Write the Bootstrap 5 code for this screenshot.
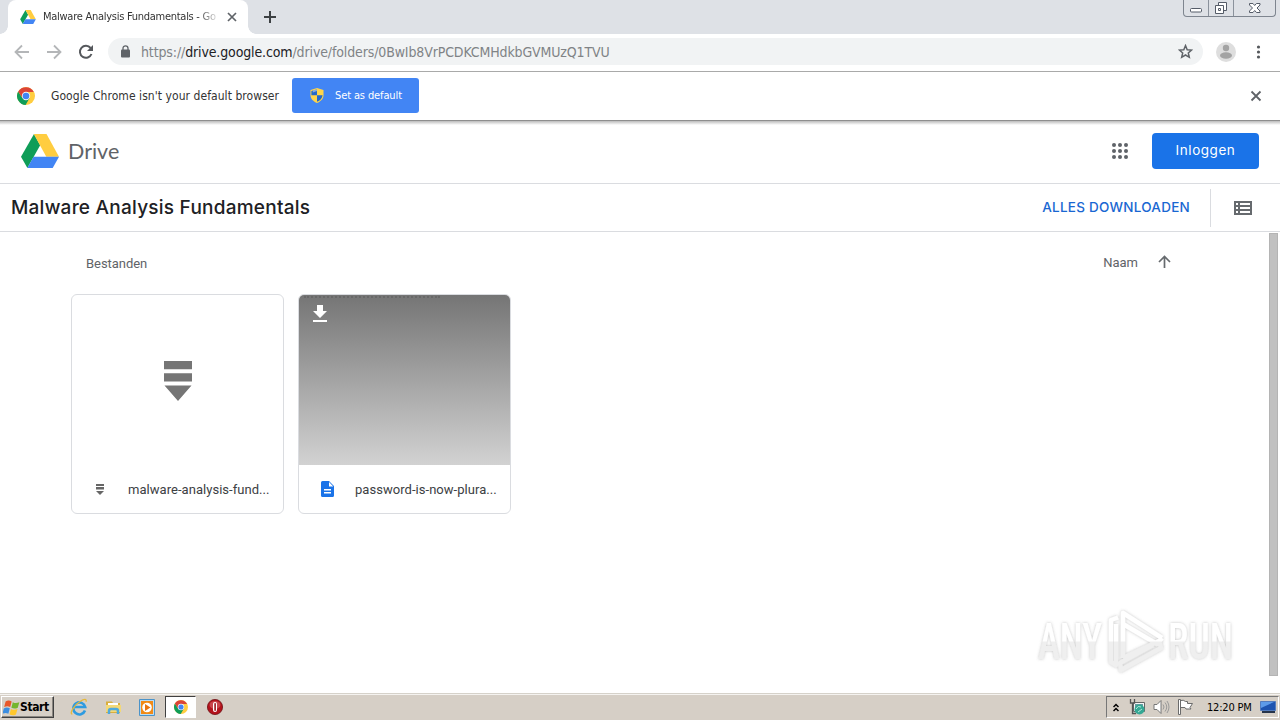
<!DOCTYPE html>
<html lang="nl">
<head>
    <meta charset="UTF-8">
    <meta name="viewport" content="width=device-width, initial-scale=1.0">
    <title>Malware Analysis Fundamentals - Google Drive</title>
    <link href="https://cdn.jsdelivr.net/npm/bootstrap@5.3.3/dist/css/bootstrap.min.css" rel="stylesheet">
    <style>
        body {
            width: 1280px;
            height: 720px;
            overflow: hidden;
            background: #fff;
            color: #333;
            font-family: "DejaVu Sans Condensed", "DejaVu Sans", sans-serif;
            font-stretch: condensed;
            line-height: 1;
        }
        svg { display: block; flex: none; }
        span { white-space: nowrap; }

        /* Chrome window */
        .tab-strip { height: 34px; background: #dee1e6; padding-left: 8px; }
        .browser-tab {
            width: 240px;
            height: 34px;
            padding: 0 11px 0 12px;
            background: #fff;
            border-radius: 8px 8px 0 0;
            font-size: 11px;
            position: relative;
        }
        .browser-tab::before, .browser-tab::after {
            content: "";
            position: absolute;
            bottom: 0;
            width: 8px;
            height: 8px;
        }
        .browser-tab::before { left: -8px; background: radial-gradient(circle at 0 0, #dee1e6 7.5px, #fff 8px); }
        .browser-tab::after { right: -8px; background: radial-gradient(circle at 100% 0, #dee1e6 7.5px, #fff 8px); }
        .tab-title {
            width: 178px;
            margin-left: 7px;
            line-height: 16px;
            letter-spacing: -0.27px;
            -webkit-mask-image: linear-gradient(90deg, #000 155px, transparent 177px);
        }
        .win-buttons {
            width: 93px;
            height: 17px;
            margin-right: 4px;
            border: 1px solid #7e858f;
            border-top: 0;
            border-radius: 0 0 4px 4px;
        }
        .win-buttons > div { border-right: 1px solid #8b929c; }
        .win-buttons > div:last-child { border-right: 0; }
        .toolbar { height: 38px; border-bottom: 1px solid #a9aaa9; padding: 0 14px 2px; }
        .address {
            width: 1095px;
            height: 27px;
            margin-left: 14px;
            padding: 0 10px 0 12px;
            border-radius: 14px;
            background: #f1f3f4;
            color: #808386;
            font-size: 14px;
            letter-spacing: -0.13px;
        }
        .address b { font-weight: 400; color: #202124; }
        .infobar { height: 48px; padding: 0 18px 1px 17px; font-size: 12px; letter-spacing: .06px; }
        .btn-default-browser {
            width: 127px;
            height: 35px;
            padding: 0 0 0 17px;
            border-radius: 3px;
            background: #4285f4;
            color: #fff;
            font-size: 11px;
            letter-spacing: -0.12px;
        }

        /* Drive page */
        .drive-page { height: 573px; background: linear-gradient(#bbb, #fff 4px); border-top: 1px solid #8e8e8e; }
        .drive-header { height: 63px; padding: 0 21px 3px; border-bottom: 1px solid #dadce0; }
        .drive-name { font: 21.5px/1 Lato, sans-serif; color: #5f6368; padding-top: 2px; }
        .btn-login {
            width: 107px;
            height: 36px;
            padding: 0;
            border-radius: 4px;
            background: #1a73e8;
            color: #fff;
            font: 400 13.5px/1 Inter, sans-serif;
            letter-spacing: .55px;
        }
        .folder-bar { height: 48px; padding-left: 11px; border-bottom: 1px solid #dadce0; }
        .folder-bar h1 { font: 500 19px/1 Inter, sans-serif; letter-spacing: .24px; color: #202124; }
        .download-all { font: 500 13.5px/1 Inter, sans-serif; letter-spacing: .25px; color: #1967d2; padding-top: 1px; }
        .view-toggle { width: 70px; height: 38px; border-left: 1px solid #dadce0; padding-left: 23px; }
        .files { height: 461px; }
        .files-main { font: 13px/1 Roboto, sans-serif; color: #5f6368; padding: 0 108px 0 71px; }
        .files-head { height: 62px; padding: 0 0 0 15px; letter-spacing: -.04px; }
        .file-card { width: 213px; height: 220px; border: 1px solid #dadce0; border-radius: 6px; overflow: hidden; color: #3c4043; }
        .preview { height: 170px; padding-top: 2px; }
        .preview-doc { background: linear-gradient(#757575, #d2d2d2); position: relative; padding-top: 0; }
        .doc-line {
            position: absolute;
            left: 5px;
            top: 1px;
            width: 136px;
            border-top: 2px dotted #686868;
        }
        .file-name { height: 48px; font-size: 13px; letter-spacing: .04px; }
        .scrollbar-thumb { width: 9px; height: 443px; margin: 1px 2px 0 0; background: #c1c1c1; border: 1px solid #b4b4b4; }
        .watermark { position: absolute; left: 1030px; top: 602px; overflow: visible; }

        /* Windows taskbar */
        .taskbar { height: 28px; background: #d6cfc6; border-top: 1px solid #d6d2ca; box-shadow: inset 0 1px #f5f3f0; padding: 0 0 1px 1px; color: #000; font-size: 11px; }
        .start-btn {
            width: 53px;
            height: 22px;
            border: 1px solid;
            border-color: #fff #404040 #404040 #fff;
            box-shadow: inset -1px -1px #8a8680;
            font-size: 12px;
            font-weight: 700;
            letter-spacing: -0.4px;
        }
        .task-active { width: 31px; height: 22px; background: #fff; border: 1px solid; border-color: #404040 #fff #fff #404040; }
        .tray { width: 173px; height: 22px; margin-right: 1px; border: 1px solid; border-color: #777 #fff #fff #777; padding-left: 6px; }
    </style>
</head>
<body>
    <!-- shared logos -->
    <svg width="0" height="0" class="position-absolute">
        <defs>
            <symbol id="drive-logo" viewBox="0 0 38 34">
                <path fill="#0f9d58" d="M13 0 0 22.7 6.4 34 19.2 11.3z"/>
                <path fill="#ffcd40" d="M12.8 0h12.7L38 22.7H25.3z"/>
                <path fill="#4285f4" d="M12.6 22.7H38L31.7 34H6.3z"/>
            </symbol>
            <symbol id="chrome-logo" viewBox="0 0 18 18">
                <circle cx="9" cy="9" r="9" fill="#ffcd40"/>
                <path fill="#0f9d58" d="M1.2 4.5A9 9 0 0 0 8.6 18l4-6.9-7.2 0z"/>
                <path fill="#db4437" d="M1.2 4.5A9 9 0 0 1 16.8 5H9L5.4 11.1z"/>
                <circle cx="9" cy="9" r="4.2" fill="#f5f5f5"/>
                <circle cx="9" cy="9" r="3.3" fill="#4285f4"/>
            </symbol>
            <symbol id="stack-arrow" viewBox="0 0 28 40">
                <path fill="#757575" d="M0 0h28v8.300H0zM0 12.200h28v8.300H0zM.5 24.500h27L14 40z"/>
            </symbol>
        </defs>
    </svg>

    <div class="tab-strip d-flex">
        <div class="browser-tab d-flex align-items-center">
            <svg width="16" height="14"><use href="#drive-logo"/></svg>
            <span class="tab-title">Malware Analysis Fundamentals - Go</span>
            <svg class="ms-auto" width="10" height="10" viewBox="0 0 10 10"><path d="m1 1 8 8M9 1 1 9" stroke="#5f6368" stroke-width="1.700"/></svg>
        </div>
        <svg class="align-self-center" style="margin-left: 16px" width="12" height="12" viewBox="0 0 12 12"><path d="M6 0v12M0 6h12" stroke="#3c4043" stroke-width="2"/></svg>
        <div class="win-buttons d-flex ms-auto">
            <div style="width: 25px"><svg width="24" height="16" viewBox="0 0 24 16"><rect x="6.500" y="8.500" width="11" height="3.500" rx="1" fill="#fff" stroke="#555c68"/></svg></div>
            <div style="width: 25px"><svg width="24" height="16" viewBox="0 0 24 16"><path fill="#fff" stroke="#555c68" d="M9.500 2.500h8v8h-8z"/><path fill="#fff" stroke="#555c68" d="M6.500 5.500h8v8h-8zM9.500 8.500h2v2h-2z"/></svg></div>
            <div style="width: 41px"><svg width="41" height="16" viewBox="0 0 41 16"><path fill="#fff" stroke="#555c68" d="M15.500 3.500h3.500l1.700 2 1.700-2h3.600v1.500L23 8l3 3v1.500h-3.500l-1.800-2-1.700 2h-3.500V11l3-3-3-3z"/></svg></div>
        </div>
    </div>

    <div class="toolbar d-flex align-items-center">
        <svg width="16" height="16" viewBox="0 0 16 16" fill="none" stroke="#b4b6b8" stroke-width="1.800"><path d="M15 8H2M8 1.500 1.500 8 8 14.500"/></svg>
        <svg style="margin-left: 16px" width="16" height="16" viewBox="0 0 16 16" fill="none" stroke="#b4b6b8" stroke-width="1.800"><path d="M1 8h13M8 1.500 14.500 8 8 14.500"/></svg>
        <svg style="margin-left: 16px" width="16" height="16" viewBox="0 0 16 16"><path d="M13.500 10A6 6 0 1 1 12.600 4" fill="none" stroke="#55585c" stroke-width="2"/><path fill="#55585c" d="M15 1v6H9z"/></svg>
        <div class="address d-flex align-items-center">
            <svg width="11" height="13" viewBox="0 0 11 13"><rect x="1" y="4.500" width="9" height="8" rx="1" fill="#5f6368"/><path d="M3 5V3.300a2.500 2.500 0 0 1 5 0V5" fill="none" stroke="#5f6368" stroke-width="1.300"/></svg>
            <span class="url" style="margin-left: 10px">https://<b>drive.google.com</b>/drive/folders/0BwIb8VrPCDKCMHdkbGVMUzQ1TVU</span>
            <svg class="ms-auto" width="15" height="15" viewBox="0 0 15 15"><path d="m7.500 1.600 1.700 4.100 4.400.4-3.300 2.900 1 4.300-3.800-2.300-3.800 2.300 1-4.300L1.400 6.100l4.400-.4z" fill="none" stroke="#5f6368" stroke-width="1.500"/></svg>
        </div>
        <svg style="margin-left: 13px" width="20" height="20" viewBox="0 0 20 20"><circle cx="10" cy="10" r="10" fill="#dedede"/><circle cx="10" cy="6" r="3.200" fill="#a3a3a3"/><ellipse cx="10" cy="13.500" rx="6" ry="3.200" fill="#a3a3a3"/></svg>
        <svg class="ms-auto me-1" width="8" height="14" viewBox="0 0 8 14" fill="#55585c"><circle cx="4.500" cy="2" r="1.600"/><circle cx="4.500" cy="7" r="1.600"/><circle cx="4.500" cy="12" r="1.600"/></svg>
    </div>

    <div class="infobar d-flex align-items-center">
        <svg width="18" height="18"><use href="#chrome-logo"/></svg>
        <span class="info-text" style="margin-left: 16px; width: 241px">Google Chrome isn't your default browser</span>
        <button type="button" class="btn btn-default-browser d-flex align-items-center">
            <svg width="14" height="15" viewBox="0 0 14 15"><path fill="#ffd54a" d="M7 0 13.500 2v5c0 4-3 6.500-6.500 8C3.500 13.500.5 11 .5 7V2z"/><path fill="#2469c9" d="M7 1.200v6H1.400V2.900zM7 7.200h5.600c-.2 3-2.600 5.200-5.600 6.600z"/><path fill="#e8f0fb" d="M7 1.200 2.800 2.400v2L7 3z" opacity=".5"/></svg>
            <span class="default-text" style="margin-left: 11px; padding-top: 1px">Set as default</span>
        </button>
        <svg class="ms-auto" width="12" height="12" viewBox="0 0 12 12"><path d="m1.500 1.500 9 9M10.500 1.500l-9 9" stroke="#5f6368" stroke-width="1.800"/></svg>
    </div>

    <main class="drive-page">
        <header class="drive-header d-flex align-items-center">
            <svg width="38" height="34"><use href="#drive-logo"/></svg>
            <span class="drive-name" style="margin-left: 9px">Drive</span>
            <svg class="ms-auto" width="16" height="16" viewBox="0 0 16 16" fill="#5f6368"><circle cx="2" cy="2" r="2"/><circle cx="8" cy="2" r="2"/><circle cx="14" cy="2" r="2"/><circle cx="2" cy="8" r="2"/><circle cx="8" cy="8" r="2"/><circle cx="14" cy="8" r="2"/><circle cx="2" cy="14" r="2"/><circle cx="8" cy="14" r="2"/><circle cx="14" cy="14" r="2"/></svg>
            <button type="button" class="btn btn-login" style="margin-left: 24px">Inloggen</button>
        </header>
        <div class="folder-bar d-flex align-items-center">
            <h1 class="mb-0">Malware Analysis Fundamentals</h1>
            <span class="download-all ms-auto" style="margin-right: 20px">ALLES DOWNLOADEN</span>
            <div class="view-toggle d-flex align-items-center">
                <svg width="18" height="14" viewBox="0 0 18 14"><path fill="#666a6e" fill-rule="evenodd" d="M0 0h18v14H0zM2 2v2h2V2zm4 0v2h10V2zM2 6v2h2V6zm4 0v2h10V6zM2 10v2h2v-2zm4 0v2h10v-2z"/></svg>
            </div>
        </div>
        <div class="files d-flex">
            <div class="files-main flex-grow-1">
                <div class="files-head d-flex align-items-center">
                    <span>Bestanden</span>
                    <span class="naam ms-auto" style="padding-bottom: 1px">Naam</span>
                    <svg style="margin: -3px -10px 0 20px" width="13" height="13" viewBox="0 0 13 13"><path d="M6.500 13V1.500M1 7l5.500-5.500L12 7" fill="none" stroke="#666a6e" stroke-width="1.700"/></svg>
                </div>
                <div class="d-flex" style="gap: 14px">
                    <div class="file-card">
                        <div class="preview d-flex align-items-center justify-content-center">
                            <svg width="28" height="40"><use href="#stack-arrow"/></svg>
                        </div>
                        <div class="file-name d-flex align-items-center">
                            <svg style="margin-left: 24px" width="8" height="11" viewBox="0 0 8 11"><path fill="#666" d="M0 0h8v2H0zM0 3h8v2.500H0zM0 7h8l-4 4z"/></svg>
                            <span style="margin-left: 24px">malware-analysis-fund...</span>
                        </div>
                    </div>
                    <div class="file-card">
                        <div class="preview preview-doc">
                            <div class="doc-line"></div>
                            <svg style="padding: 10px 0 0 14px; box-sizing: content-box" width="14" height="17" viewBox="0 0 14 17"><path fill="#fff" d="M4 0h6v6h4l-7 7-7-7h4zM0 15h14v2H0z"/></svg>
                        </div>
                        <div class="file-name d-flex align-items-center">
                            <svg style="margin-left: 22px" width="13" height="16" viewBox="0 0 13 16"><path fill="#1a73e8" d="M1.500 0H8l5 5v9.500a1.500 1.500 0 0 1-1.500 1.500h-10A1.500 1.500 0 0 1 0 14.500v-13A1.500 1.500 0 0 1 1.500 0z"/><path fill="#fff" d="M8 1v4.500h4.300zM3 8h7v1.500H3zM3 11h7v1.500H3z"/></svg>
                            <span style="margin-left: 21px">password-is-now-plura...</span>
                        </div>
                    </div>
                </div>
            </div>
            <div class="scrollbar-thumb"></div>
        </div>
    </main>

    <footer class="taskbar d-flex align-items-center">
        <div class="start-btn d-flex align-items-center">
            <svg style="margin-left: 1px" width="17" height="17" viewBox="1 1 13 12"><path fill="#e8572a" d="M3 2.500c2-1.200 3-1 4.600-.1L6.500 6.600c-1.500-.8-3-.8-4.600.1z"/><path fill="#74b62e" d="M8.500 2.900c1.800.9 3 .8 5 0l-1.200 4.200c-2 .9-3.200.8-4.900 0z"/><path fill="#3b8de0" d="M1.600 7.700c1.700-1 3-.9 4.600-.1l-1.100 4.200c-1.500-.8-3-.8-4.600.1z"/><path fill="#ffc72c" d="M7.100 8.100c1.800.9 3 .8 5 0l-1.200 4.200c-2 .9-3.200.8-4.900 0z"/></svg>
            <span>Start</span>
        </div>
        <svg style="margin-left: 16px" width="18" height="18" viewBox="0 0 18 18"><path d="M15 12.500A6 6 0 1 1 15.200 9H5" fill="none" stroke="#2e9be0" stroke-width="2.600"/><path d="M2.300 16C-1 16 4 7 10 3.500c4-2.500 7-3 6 .2" fill="none" stroke="#e6b83a" stroke-width="1.300"/></svg>
        <svg style="margin-left: 17px" width="17" height="17" viewBox="0 0 17 17"><path fill="#d9ae3d" d="M1 2.500h6l1 1.500h7V14H1z"/><path fill="#fff" d="M3 4h10v3H3z"/><path fill="#f3d877" d="M1 6h15v7H1z"/><path d="M4 15v-3q0-2 2-2h5q2 0 2 2v3" fill="none" stroke="#4fa9dc" stroke-width="2.500"/></svg>
        <svg style="margin-left: 17px" width="16" height="17" viewBox="0 0 16 17"><path fill="#b9dcf4" stroke="#4b93c9" d="M.5.500h15v16H.5z"/><path fill="#f18a16" d="M2 2h12v13H2z"/><circle cx="8" cy="8.500" r="4.800" fill="#fff"/><path fill="#e87510" d="m6 5 5.500 3.500L6 12z"/></svg>
        <div class="task-active d-flex align-items-center justify-content-center" style="margin-left: 10px">
            <svg width="14" height="14"><use href="#chrome-logo"/></svg>
        </div>
        <svg style="margin-left: 11px" width="16" height="16" viewBox="0 0 16 16"><circle cx="8" cy="8" r="7.600" fill="#b3121b" stroke="#701216" stroke-width=".8"/><ellipse cx="8" cy="6" rx="5.500" ry="4" fill="#c9454b"/><rect x="6" y="3" width="4" height="10" rx="2" fill="#fff"/><rect x="7.300" y="4" width="1.600" height="8" rx=".8" fill="#98141b"/></svg>
        <div class="tray d-flex align-items-center ms-auto">
            <svg width="6" height="9" viewBox="0 0 6 9"><path d="m.5 4 2.500-2.500L5.500 4M.5 8 3 5.500 5.500 8" fill="none" stroke="#000" stroke-width="1.500"/></svg>
            <svg style="margin-left: 10px" width="16" height="16" viewBox="0 0 16 16"><path fill="#f5f5f5" stroke="#666" d="M4.500 3.500h11v9h-11z"/><path fill="#6c9da3" d="M6 5h8v6H6z"/><path d="M1.500 0v4h4V0M3.500 4v10.500H7" fill="none" stroke="#555" stroke-width="1.300"/><circle cx="10.500" cy="10.500" r="5" fill="#35a894"/><path d="M7 10q2-4 5-2M9 13l4-3" stroke="#b5e7dc" fill="none"/></svg>
            <svg style="margin-left: 8px" width="17" height="16" viewBox="0 0 17 16"><path d="M1 5.500h3l4-4v13l-4-4H1z" fill="#fff" stroke="#777"/><path d="M10 5.500q2 2.500 0 5M12 3.500q3.500 4.500 0 9M14 2q4 6 0 12" fill="none" stroke="#999"/></svg>
            <svg style="margin-left: 7px" width="17" height="16" viewBox="0 0 17 16"><path d="M1.500.5h2v15h-2zM3.500 1.500q3-1 5 1h2v2h5l-2.500 4 1 1.500H9l-1-1.500H3.500z" fill="#fff" stroke="#6b6b6b"/></svg>
            <span class="clock" style="margin-left: 13px; letter-spacing: -.2px; width: 45px">12:20 PM</span>
            <svg style="margin-left: 8px" width="16" height="14" viewBox="0 0 16 14"><path fill="#1e54b0" stroke="#547cbd" d="M.5 1.500h15v9H.5z"/><path fill="#5d9be9" d="M1 2h13L1 8z"/><path fill="#26344b" d="M2 11h13v2H2z"/></svg>
        </div>
    </footer>

    <svg class="watermark" width="220" height="76" viewBox="0 0 220 76">
        <defs>
            <linearGradient id="fade" x1="0" y1="0" x2="0" y2="76" gradientUnits="userSpaceOnUse">
                <stop offset=".51" stop-color="#fff"/><stop offset=".53" stop-color="#efefef"/>
            </linearGradient>
            <filter id="halo" x="-10%" y="-10%" width="120%" height="120%"><feDropShadow dx="0" dy="0" stdDeviation="1.800" flood-color="#777" flood-opacity=".45"/></filter>
        </defs>
        <g filter="url(#halo)" fill="url(#fade)" font-family="Roboto, sans-serif" font-size="50" font-weight="500">
            <text x="8" y="57" textLength="64" lengthAdjust="spacingAndGlyphs">ANY</text>
            <text x="138" y="57" textLength="65" lengthAdjust="spacingAndGlyphs">RUN</text>
            <!-- two nested rounded play outlines -->
            <g fill="none" stroke="url(#fade)" stroke-width="4.500" stroke-linejoin="round">
                <path d="M88 15.500 81 18v42l5 3V22"/>
                <path d="M93 56V11l39 25"/>
                <path d="M93 22l34 20 5-6"/>
                <path d="M93 56l36-17 2 7-40 22-1-7 33-18"/>
            </g>
        </g>
    </svg>

    <script src="https://cdn.jsdelivr.net/npm/bootstrap@5.3.3/dist/js/bootstrap.bundle.min.js"></script>
</body>
</html>
